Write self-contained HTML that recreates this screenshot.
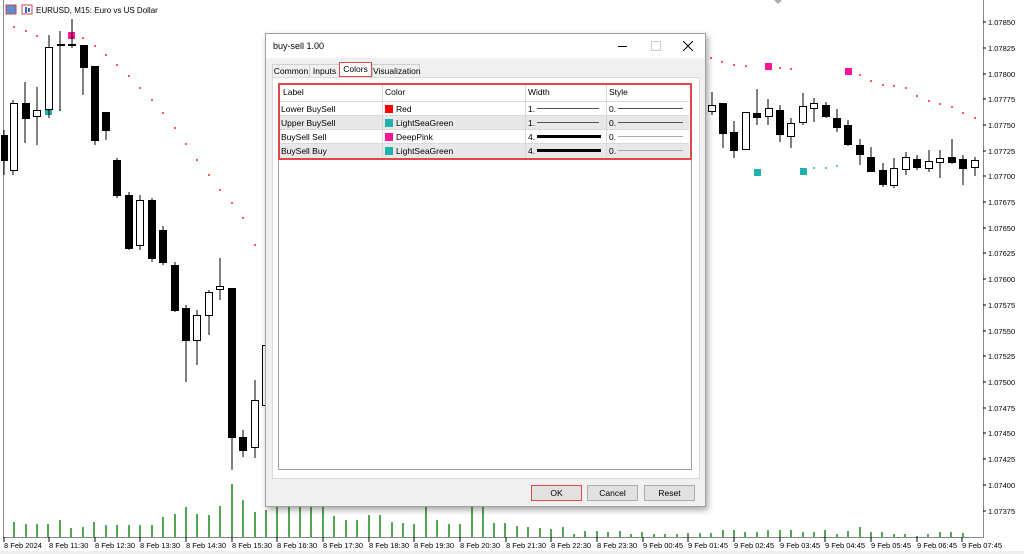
<!DOCTYPE html>
<html><head><meta charset="utf-8"><style>
body{margin:0;width:1024px;height:554px;overflow:hidden;background:#fff;font-family:"Liberation Sans",sans-serif;position:relative}
svg{position:absolute;left:0;top:0}
.t{font-size:8px;fill:#000}
.dlg{position:absolute;left:265px;top:33px;width:439px;height:472px;background:#f0f0f0;border:1px solid #a0a0a0;box-shadow:2px 3px 6px rgba(0,0,0,.35);font-size:8.5px;color:#000}
.ttl{position:absolute;left:0;top:0;width:439px;height:24px;background:#fff}
.tab{position:absolute;top:30px;height:13px;border:1px solid #d0d0d0;border-bottom:none;background:#f0f0f0;line-height:13px;text-align:center}
.panel{position:absolute;left:6px;top:43px;width:426px;height:400px;background:#fff;border:1px solid #dadada}
.grid{position:absolute;left:12px;top:49px;width:412px;height:385px;background:#fff;border:1px solid #a0a0a0}
.row{position:absolute;left:0;width:410px;height:14px;line-height:14px;border-top:1px solid #d8d8d8}
.row span{position:absolute}
.sw{display:inline-block;width:8px;height:8px;vertical-align:-1px;margin-right:3px}
.btn{position:absolute;top:451px;width:49px;height:14px;background:#e1e1e1;border:1px solid #adadad;text-align:center;line-height:14px}
</style></head><body>
<svg width="1024" height="554">
<rect x="3" y="0" width="1" height="538" fill="#888"/>
<rect x="983" y="0" width="1" height="538" fill="#888"/>
<rect x="3" y="537" width="981" height="1" fill="#888"/>
<rect x="0" y="551" width="1024" height="3" fill="#eee"/>
<rect x="6" y="5" width="10" height="9" fill="#5b8fd0" stroke="#d04040" stroke-width="1"/>
<rect x="22" y="5" width="10" height="9" fill="#fff" stroke="#d04040" stroke-width="1"/><rect x="25" y="7" width="2" height="6" fill="#3070c0"/><rect x="28" y="8" width="2" height="4" fill="#3070c0"/>
<text x="36" y="13" class="t">EURUSD, M15:  Euro vs US Dollar</text>
<g fill="#ff2020">
<circle cx="14" cy="27" r="1"/><circle cx="26" cy="31" r="1"/><circle cx="37" cy="36" r="1"/><circle cx="83" cy="38" r="1"/><circle cx="95" cy="46" r="1"/><circle cx="106" cy="55" r="1"/><circle cx="117" cy="65" r="1"/><circle cx="129" cy="76" r="1"/><circle cx="140" cy="88" r="1"/><circle cx="152" cy="100" r="1"/><circle cx="163" cy="113" r="1"/><circle cx="175" cy="128" r="1"/><circle cx="186" cy="144" r="1"/><circle cx="197" cy="160" r="1"/><circle cx="209" cy="175" r="1"/><circle cx="220" cy="190" r="1"/><circle cx="232" cy="203" r="1"/><circle cx="243" cy="218" r="1"/><circle cx="255" cy="245" r="1"/>
<circle cx="711" cy="58" r="1"/><circle cx="722" cy="62" r="1"/><circle cx="734" cy="65" r="1"/><circle cx="746" cy="66" r="1"/><circle cx="780" cy="68" r="1"/><circle cx="791" cy="69" r="1"/><circle cx="860" cy="75" r="1"/><circle cx="871" cy="81" r="1"/><circle cx="883" cy="85" r="1"/><circle cx="894" cy="86" r="1"/><circle cx="906" cy="88" r="1"/><circle cx="917" cy="96" r="1"/><circle cx="929" cy="101" r="1"/><circle cx="940" cy="104" r="1"/><circle cx="952" cy="107" r="1"/><circle cx="963" cy="113" r="1"/><circle cx="975" cy="118" r="1"/>
</g>
<g fill="#20b2aa"><circle cx="60" cy="110" r="1"/><circle cx="814" cy="168" r="1"/><circle cx="826" cy="168" r="1"/><circle cx="837" cy="166" r="1"/>
<rect x="45" y="108" width="7" height="7"/><rect x="754" y="169" width="7" height="7"/><rect x="800" y="168" width="7" height="7"/></g>
<g fill="#ff1493"><rect x="68" y="32" width="7" height="7"/><rect x="765" y="63" width="7" height="7"/><rect x="845" y="68" width="7" height="7"/></g>
<g stroke="#000" stroke-width="1" shape-rendering="crispEdges">
<line x1="4" y1="130" x2="4" y2="175"/><line x1="13" y1="100" x2="13" y2="175"/><line x1="25" y1="82" x2="25" y2="143"/><line x1="37" y1="87" x2="37" y2="145"/><line x1="49" y1="35" x2="49" y2="118"/><line x1="60" y1="31" x2="60" y2="111"/><line x1="72" y1="19" x2="72" y2="48"/><line x1="83" y1="45" x2="83" y2="95"/><line x1="95" y1="66" x2="95" y2="145"/><line x1="106" y1="112" x2="106" y2="140"/><line x1="117" y1="158" x2="117" y2="198"/><line x1="129" y1="192" x2="129" y2="250"/><line x1="140" y1="195" x2="140" y2="250"/><line x1="152" y1="198" x2="152" y2="262"/><line x1="163" y1="226" x2="163" y2="265"/><line x1="175" y1="262" x2="175" y2="312"/><line x1="186" y1="305" x2="186" y2="382"/><line x1="197" y1="310" x2="197" y2="365"/><line x1="209" y1="290" x2="209" y2="335"/><line x1="220" y1="258" x2="220" y2="300"/><line x1="232" y1="288" x2="232" y2="470"/><line x1="243" y1="430" x2="243" y2="457"/><line x1="255" y1="380" x2="255" y2="458"/><line x1="266" y1="340" x2="266" y2="440"/>
<line x1="712" y1="92" x2="712" y2="115"/><line x1="723" y1="103" x2="723" y2="148"/><line x1="734" y1="121" x2="734" y2="158"/><line x1="746" y1="112" x2="746" y2="150"/><line x1="757" y1="89" x2="757" y2="125"/><line x1="768" y1="99" x2="768" y2="125"/><line x1="780" y1="105" x2="780" y2="142"/><line x1="791" y1="118" x2="791" y2="148"/><line x1="803" y1="93" x2="803" y2="125"/><line x1="814" y1="98" x2="814" y2="122"/><line x1="826" y1="102" x2="826" y2="118"/><line x1="837" y1="109" x2="837" y2="132"/><line x1="848" y1="120" x2="848" y2="146"/><line x1="860" y1="139" x2="860" y2="165"/><line x1="871" y1="147" x2="871" y2="172"/><line x1="883" y1="163" x2="883" y2="187"/><line x1="894" y1="158" x2="894" y2="188"/><line x1="906" y1="152" x2="906" y2="175"/><line x1="917" y1="155" x2="917" y2="170"/><line x1="929" y1="150" x2="929" y2="172"/><line x1="940" y1="150" x2="940" y2="178"/><line x1="952" y1="139" x2="952" y2="164"/><line x1="963" y1="155" x2="963" y2="185"/><line x1="975" y1="157" x2="975" y2="176"/>
</g>
<g stroke="#000" stroke-width="1" fill="#000" shape-rendering="crispEdges">
<rect x="1.5" y="135.5" width="6" height="25"/><rect x="22.5" y="103.5" width="7" height="15"/><rect x="57.5" y="44.5" width="7" height="1"/><rect x="68.5" y="44.5" width="7" height="1"/><rect x="80.5" y="45.5" width="7" height="22"/><rect x="91.5" y="66.5" width="7" height="74"/><rect x="102.5" y="112.5" width="7" height="18"/><rect x="113.5" y="160.5" width="7" height="35"/><rect x="125.5" y="195.5" width="7" height="53"/><rect x="148.5" y="200.5" width="7" height="58"/><rect x="159.5" y="230.5" width="7" height="32"/><rect x="171.5" y="265.5" width="7" height="45"/><rect x="182.5" y="308.5" width="7" height="32"/><rect x="228.5" y="288.5" width="7" height="149"/><rect x="239.5" y="437.5" width="7" height="13"/>
<rect x="719.5" y="103.5" width="7" height="30"/><rect x="730.5" y="132.5" width="7" height="18"/><rect x="753.5" y="113.5" width="7" height="4"/><rect x="776.5" y="110.5" width="7" height="24"/><rect x="822.5" y="105.5" width="7" height="11"/><rect x="833.5" y="118.5" width="7" height="9"/><rect x="844.5" y="125.5" width="7" height="19"/><rect x="856.5" y="145.5" width="7" height="9"/><rect x="867.5" y="157.5" width="7" height="14"/><rect x="879.5" y="170.5" width="7" height="14"/><rect x="913.5" y="159.5" width="7" height="8"/><rect x="948.5" y="157.5" width="7" height="5"/><rect x="959.5" y="159.5" width="7" height="9"/>
</g>
<g stroke="#000" stroke-width="1" fill="#fff" shape-rendering="crispEdges">
<rect x="10.5" y="103.5" width="7" height="67"/><rect x="33.5" y="110.5" width="7" height="6"/><rect x="45.5" y="47.5" width="7" height="62"/><rect x="136.5" y="200.5" width="7" height="45"/><rect x="193.5" y="315.5" width="7" height="25"/><rect x="205.5" y="292.5" width="7" height="23"/><rect x="216.5" y="286.5" width="7" height="3"/><rect x="251.5" y="400.5" width="7" height="47"/><rect x="262.5" y="345.5" width="7" height="60"/>
<rect x="708.5" y="105.5" width="7" height="6"/><rect x="742.5" y="112.5" width="7" height="37"/><rect x="765.5" y="108.5" width="7" height="8"/><rect x="787.5" y="123.5" width="7" height="13"/><rect x="799.5" y="106.5" width="7" height="16"/><rect x="810.5" y="103.5" width="7" height="5"/><rect x="890.5" y="168.5" width="7" height="17"/><rect x="902.5" y="157.5" width="7" height="12"/><rect x="925.5" y="161.5" width="7" height="7"/><rect x="936.5" y="158.5" width="7" height="4"/><rect x="971.5" y="160.5" width="7" height="7"/>
</g>
<g stroke="#1a8a1a" stroke-width="1.5">
<path d="M14 537V522M26 537V524M37 537V524M48 537V524M60 537V520M71 537V528M83 537V527M94 537V522M106 537V525M117 537V525M129 537V525M140 537V525M152 537V525M163 537V517M175 537V514M186 537V507M197 537V514M209 537V515M220 537V506M232 537V484M243 537V500M255 537V512M266 537V510M277 537V505M289 537V505M300 537V505M311 537V505M323 537V505M334 537V516M346 537V520M357 537V520M369 537V515M380 537V515M392 537V522M403 537V523M414 537V524M426 537V505M437 537V520M449 537V524M460 537V524M472 537V505M483 537V505M494 537V523M505 537V523M517 537V526M528 537V527M540 537V528M551 537V529M563 537V527M574 537V534M585 537V531M597 537V531M608 537V532M620 537V531M631 537V534M642 537V532M654 537V534M665 537V534M677 537V534M688 537V533M700 537V533M711 537V533M723 537V530M734 537V530M745 537V532M757 537V532M768 537V530M780 537V530M791 537V530M803 537V532M814 537V532M825 537V530M837 537V534M848 537V531M860 537V527M871 537V532M882 537V532M894 537V534M905 537V534M917 537V536M928 537V534M940 537V532M951 537V532M963 537V533"/>
</g>
<g stroke="#000"><path d="M4 537v5M49 537v5M95 537v5M140 537v5M186 537v5M232 537v5M277 537v5M323 537v5M369 537v5M414 537v5M460 537v5M506 537v5M551 537v5M597 537v5M643 537v5M688 537v5M734 537v5M780 537v5M825 537v5M871 537v5M917 537v5M962 537v5"/></g>
<g class="t" font-size="7.5">
<text x="4" y="548" font-size="7.5">8 Feb 2024</text><text x="49" y="548" font-size="7.5">8 Feb 11:30</text><text x="95" y="548" font-size="7.5">8 Feb 12:30</text><text x="140" y="548" font-size="7.5">8 Feb 13:30</text><text x="186" y="548" font-size="7.5">8 Feb 14:30</text><text x="232" y="548" font-size="7.5">8 Feb 15:30</text><text x="277" y="548" font-size="7.5">8 Feb 16:30</text><text x="323" y="548" font-size="7.5">8 Feb 17:30</text><text x="369" y="548" font-size="7.5">8 Feb 18:30</text><text x="414" y="548" font-size="7.5">8 Feb 19:30</text><text x="460" y="548" font-size="7.5">8 Feb 20:30</text><text x="506" y="548" font-size="7.5">8 Feb 21:30</text><text x="551" y="548" font-size="7.5">8 Feb 22:30</text><text x="597" y="548" font-size="7.5">8 Feb 23:30</text><text x="643" y="548" font-size="7.5">9 Feb 00:45</text><text x="688" y="548" font-size="7.5">9 Feb 01:45</text><text x="734" y="548" font-size="7.5">9 Feb 02:45</text><text x="780" y="548" font-size="7.5">9 Feb 03:45</text><text x="825" y="548" font-size="7.5">9 Feb 04:45</text><text x="871" y="548" font-size="7.5">9 Feb 05:45</text><text x="917" y="548" font-size="7.5">9 Feb 06:45</text><text x="962" y="548" font-size="7.5">9 Feb 07:45</text>
</g>
<g stroke="#000"><path d="M983 22h3M983 48h3M983 74h3M983 99h3M983 125h3M983 151h3M983 176h3M983 202h3M983 228h3M983 253h3M983 279h3M983 305h3M983 331h3M983 356h3M983 382h3M983 408h3M983 433h3M983 459h3M983 485h3M983 511h3"/></g>
<g font-size="7.5" fill="#000">
<text x="988" y="25">1.07850</text><text x="988" y="51">1.07825</text><text x="988" y="77">1.07800</text><text x="988" y="102">1.07775</text><text x="988" y="128">1.07750</text><text x="988" y="154">1.07725</text><text x="988" y="179">1.07700</text><text x="988" y="205">1.07675</text><text x="988" y="231">1.07650</text><text x="988" y="256">1.07625</text><text x="988" y="282">1.07600</text><text x="988" y="308">1.07575</text><text x="988" y="334">1.07550</text><text x="988" y="359">1.07525</text><text x="988" y="385">1.07500</text><text x="988" y="411">1.07475</text><text x="988" y="436">1.07450</text><text x="988" y="462">1.07425</text><text x="988" y="488">1.07400</text><text x="988" y="514">1.07375</text>
</g>
<path d="M774 0l4 4l4-4z" fill="#aaa"/>
</svg>
<div class="dlg">
<div class="ttl"><span style="position:absolute;left:7px;top:7px;font-size:9px">buy-sell 1.00</span>
<span style="position:absolute;left:352px;top:12px;width:9px;height:1px;background:#000"></span>
<span style="position:absolute;left:385px;top:7px;width:8px;height:8px;border:1px solid #ccc"></span>
<svg style="left:417px;top:7px" width="10" height="10"><path d="M0 0L10 10M10 0L0 10" stroke="#000" stroke-width="1"/></svg></div>
<div class="tab" style="left:6px;width:36px">Common</div>
<div class="tab" style="left:43px;width:29px">Inputs</div>
<div class="tab" style="left:73px;top:28px;width:31px;height:13px;background:#fff;border:1.5px solid #e04848">Colors</div>
<div class="tab" style="left:106px;width:46px">Visualization</div>
<div class="panel"></div>
<div class="grid">
<div class="row" style="top:0;height:17px;line-height:17px;border-top:none"><span style="left:4px">Label</span><span style="left:106px">Color</span><span style="left:249px">Width</span><span style="left:330px">Style</span></div>
<div class="row" style="top:17px"><span style="left:2px">Lower BuySell</span><span style="left:106px"><i class="sw" style="background:#f00"></i>Red</span><span style="left:249px">1. <b style="display:inline-block;width:62px;height:1px;background:#555;vertical-align:3px"></b></span><span style="left:330px">0. <b style="display:inline-block;width:65px;height:1px;background:#555;vertical-align:3px"></b></span></div>
<div class="row" style="top:31px;background:#e8e8e8"><span style="left:2px">Upper BuySell</span><span style="left:106px"><i class="sw" style="background:#20b2aa"></i>LightSeaGreen</span><span style="left:249px">1. <b style="display:inline-block;width:62px;height:1px;background:#555;vertical-align:3px"></b></span><span style="left:330px">0. <b style="display:inline-block;width:65px;height:1px;background:#555;vertical-align:3px"></b></span></div>
<div class="row" style="top:45px"><span style="left:2px">BuySell Sell</span><span style="left:106px"><i class="sw" style="background:#ff1493"></i>DeepPink</span><span style="left:249px">4. <b style="display:inline-block;width:64px;height:3px;background:#000;vertical-align:2px"></b></span><span style="left:330px">0. <b style="display:inline-block;width:65px;height:1px;background:#aaa;vertical-align:3px"></b></span></div>
<div class="row" style="top:59px;background:#e8e8e8"><span style="left:2px">BuySell Buy</span><span style="left:106px"><i class="sw" style="background:#20b2aa"></i>LightSeaGreen</span><span style="left:249px">4. <b style="display:inline-block;width:64px;height:3px;background:#000;vertical-align:2px"></b></span><span style="left:330px">0. <b style="display:inline-block;width:65px;height:1px;background:#aaa;vertical-align:3px"></b></span></div>
<div style="position:absolute;left:-1px;top:-1px;width:410px;height:73px;border:2px solid #e04848"></div>
<div style="position:absolute;left:103px;top:1px;width:1px;height:73px;background:#d8d8d8"></div>
<div style="position:absolute;left:246px;top:1px;width:1px;height:73px;background:#d8d8d8"></div>
<div style="position:absolute;left:327px;top:1px;width:1px;height:73px;background:#d8d8d8"></div>
</div>
<div class="btn" style="left:265px;border:1.5px solid #e04848">OK</div>
<div class="btn" style="left:321px">Cancel</div>
<div class="btn" style="left:378px">Reset</div>
</div>
</body></html>
